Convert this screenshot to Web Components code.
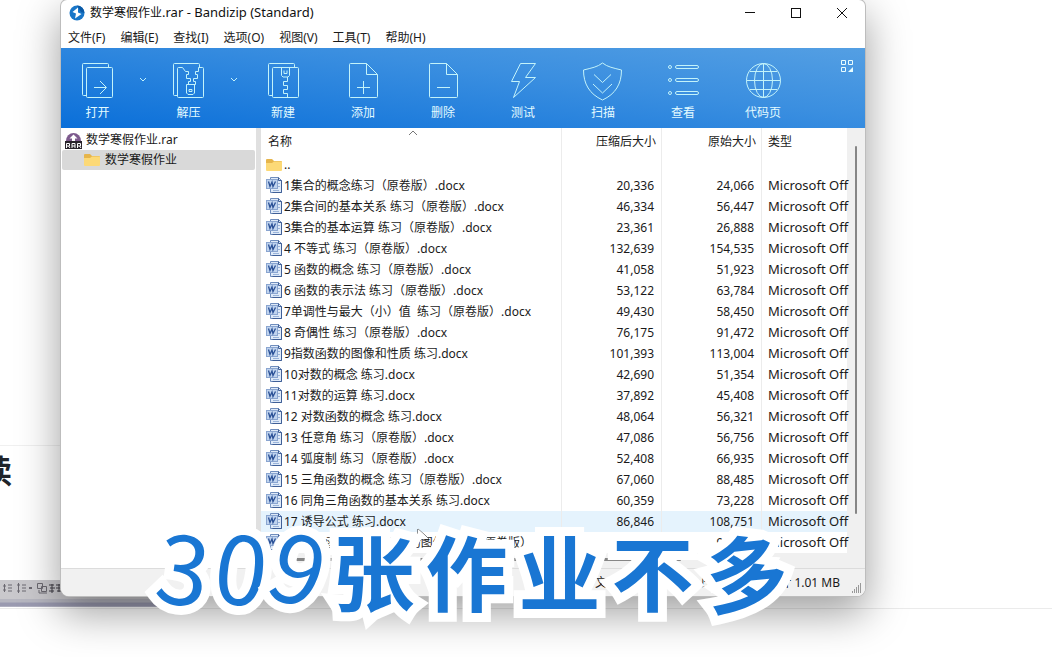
<!DOCTYPE html>
<html lang="zh-CN">
<head>
<meta charset="utf-8">
<title>数学寒假作业.rar - Bandizip</title>
<style>
html, body { margin: 0; min-height: 100%; }
body { font: 12px/20px "Noto Sans", "Noto Sans CJK SC", sans-serif; color: #1a1a1a; background: #fff; overflow: hidden; }
</style>
</head>
<body>
<desk-top>
  <page-behind slot="behind"></page-behind>
  <archive-window>
    <title-bar slot="bar">数学寒假作业<span style="font-size:13px">.rar - Bandizip (Standard)</span></title-bar>
    <menu-bar slot="bar"></menu-bar>
    <tool-bar slot="bar"></tool-bar>
    <folder-tree></folder-tree>
    <file-list></file-list>
    <status-bar slot="foot">文件: 33, 文件夹: 0, 压缩包大小: 共计 1.01 MB</status-bar>
  </archive-window>
  <video-caption slot="over" text="309张作业不多"></video-caption>
</desk-top>
<script>
const define = (name, html, setup) => customElements.define(name, class extends HTMLElement {
  constructor() {
    super();
    const t = document.createElement('template');
    t.innerHTML = html;
    this.attachShadow({ mode: 'open' }).append(t.content.cloneNode(true));
    if (setup) setup(this.shadowRoot, this);
  }
});

define('desk-top', `
<style>
:host { display: block; position: relative; min-height: 100vh; overflow: hidden; }
main { position: relative; padding: 0 187px 61px 61px; }
</style>
<slot name="behind"></slot><main><slot></slot></main><slot name="over"></slot>`);

define('page-behind', `
<style>
:host { position: absolute; inset: 0; background: #fff; }
.word { position: absolute; left: -20px; top: 454px; font-size: 32px; line-height: 34px; font-weight: 700; color: #20242a; }
.rule { position: absolute; left: 0; top: 445px; width: 61px; height: 1px; background: #f0f0f0; }
.line { position: absolute; left: 0; right: 0; top: 608px; height: 1px; background: #ebebeb; }
.strip { position: absolute; left: 0; top: 580px; width: 176px; height: 27px; background: linear-gradient(#c9c8cc 0 19px, #b6b6c0 19px 22px, #9a9ab0 23px 26px, #c5c5d0); }
svg { display: block; }
</style>
<div class="rule"></div><div class="line"></div><div class="word">读</div>
<div class="strip"><svg width="62" height="18" fill="none" stroke="#6b6870"><path d="M4.500 4v8M3 6h3M3 10h3M8 5h4M8 8h4M8 11h4M18.500 3v10M17 5h3M17 11h3M22 5h4M22 8h4M22 11h4"/><path d="M29 8h3" stroke-width="2"/><path d="M37.500 3.500h5v5h-5zM41.500 6.500h5v5h-5zM39 10v3h8"/><path d="M49 5h5M50 8h5M49 11h5M52 4v9M56 5h5M56 8h5M57 11h4M59 4v8" stroke="#3f3d44"/></svg></div>`);

define('archive-window', `
<style>
:host { display: block; background: #fff; border-radius: 6px 6px 8px 8px; overflow: hidden; box-shadow: 0 0 0 1px #bdbdbd, 0 16px 42px 2px rgba(0,0,0,.37); }
.body { display: grid; grid-template-columns: 195px minmax(0, 1fr); }
</style>
<slot name="bar"></slot><div class="body"><slot></slot></div><slot name="foot"></slot>`);

define('title-bar', `
<style>
:host { display: flex; align-items: center; height: 25px; padding: 0 0 2px 8px; gap: 5px; color: #111; }
h1 { font: inherit; margin: 0; flex: 1; }
.ctl { display: flex; }
button { all: unset; width: 46px; height: 24px; display: grid; place-items: center; }
svg { display: block; }
</style>
<svg width="16" height="16" viewBox="0 0 16 16"><circle cx="8" cy="8" r="7.500" fill="#1976c8"/><path d="M8 .5a7.500 7.500 0 0 1 7.500 7.500L12 7z" fill="#0b5aa6"/><path d="M9 2.500L3.500 7l3.500 1.500L6 13.500 12.500 9 9 7.500z" fill="#fff"/></svg>
<h1><slot></slot></h1>
<div class="ctl">
<button aria-label="最小化"><svg width="12" height="12" stroke="#111"><path d="M1 5.500h10"/></svg></button>
<button aria-label="最大化"><svg width="12" height="12" stroke="#111" fill="none"><rect x="1.500" y="1.500" width="9" height="9"/></svg></button>
<button aria-label="关闭"><svg width="12" height="12" stroke="#111"><path d="M1 1l10 10M11 1L1 11"/></svg></button>
</div>`);

define('menu-bar', `
<style>
:host { display: block; height: 21px; padding: 0 7px; }
nav { display: flex; gap: 15px; }
button { all: unset; font: inherit; line-height: 21px; }
</style><nav></nav>`, root => {
  for (const m of ['文件(F)', '编辑(E)', '查找(I)', '选项(O)', '视图(V)', '工具(T)', '帮助(H)']) {
    const b = document.createElement('button');
    b.textContent = m;
    root.querySelector('nav').append(b);
  }
});

const back = '<path d="M8.500 34.500H5.500a1 1 0 0 1-1-1V3.500a1 1 0 0 1 1-1h24a1 1 0 0 1 1 1V6"/>';
const icons = {
  open: back + '<rect x="8.500" y="6.500" width="26" height="30" rx="1"/><path d="M16 26.500h12M22 20l6.500 6.500L22 33"/>',
  extract: back + '<path d="M13.500 6.500h-4a1 1 0 0 0-1 1v28a1 1 0 0 0 1 1h24a1 1 0 0 0 1-1v-28a1 1 0 0 0-1-1h-4v4h-3v3h2v4h-4v3h2v3h-7v-3h2v-3h-4v-4h2v-3h-3zM17.500 23.500h8v8.500l-1.500 1.500h-5L17.500 32zM20 28.500h3v2h-3z"/>',
  create: back + '<rect x="8.500" y="6.500" width="26" height="30" rx="1"/><path d="M17.500 6.500v8l1.500 1.500h5l1.500-1.500v-8M20 9.500v3h3v-3M23.500 16v4.500h-4v4h4v4h-4v4h4v4"/>',
  add: '<path d="M22.500 2.500H6.500a1 1 0 0 0-1 1v32a1 1 0 0 0 1 1h26a1 1 0 0 0 1-1V13.500zV13.500h11M13 26.500h13M19.500 20v13"/>',
  del: '<path d="M22.500 2.500H6.500a1 1 0 0 0-1 1v32a1 1 0 0 0 1 1h26a1 1 0 0 0 1-1V13.500zV13.500h11M13 26.500h13"/>',
  test: '<path d="M16.500 2.500h15l-10 14h10L9.500 36.500l6-16h-8z"/>',
  scan: '<path d="M18.500 2c5 4 11 5 19 7c0 14-6 24-19 30C5.500 33-.5 23-.5 9c8-2 14-3 19-7zM10 13.500l8.500 8 8.500-8M9 23l9.500 9 9.500-9"/>',
  view: '<circle cx="6" cy="6" r="1.500"/><circle cx="6" cy="19" r="1.500"/><circle cx="6" cy="32" r="1.500"/><rect x="11.500" y="4.500" width="23" height="3" rx="1.500"/><rect x="11.500" y="17.500" width="23" height="3" rx="1.500"/><rect x="11.500" y="30.500" width="23" height="3" rx="1.500"/>',
  globe: '<circle cx="19.500" cy="19.500" r="17"/><ellipse cx="19.500" cy="19.500" rx="9" ry="17"/><path d="M2.500 19.500h34M19.500 2.500v34M6 10.500h27M6 28.500h27"/>'
};
define('tool-button', `
<style>
:host { display: block; }
button { all: unset; box-sizing: border-box; width: 100%; display: grid; justify-items: center; font: inherit; line-height: 18px; color: #e3fbff; padding-top: 13px; gap: 4px; }
svg { display: block; overflow: visible; }
</style>
<button><svg width="39" height="39" fill="none" stroke="#c3f3fa"></svg><slot></slot></button>`, (root, el) => {
  root.querySelector('svg').innerHTML = icons[el.getAttribute('icon')];
});

define('tool-bar', `
<style>
:host { display: flex; justify-content: space-between; align-items: flex-start; height: 80px; background: linear-gradient(187deg, #549fe3 0, #3b8fe0 38%, #0a6fd9 100%); }
.tools { display: grid; grid-template-columns: 73px 18px 73px 18px 80px repeat(6, 80px); }
.arrow { all: unset; display: block; align-self: start; padding-top: 28px; }
.arrow svg { display: block; margin: 0 auto; }
.grid { all: unset; margin: 12px 12px 0 0; }
svg { display: block; }
</style>
<div class="tools">
<tool-button icon="open">打开</tool-button>
<button class="arrow" aria-label="打开选项"><svg width="8" height="7" fill="none" stroke="#c3f3fa"><path d="M1 2l3 3 3-3"/></svg></button>
<tool-button icon="extract">解压</tool-button>
<button class="arrow" aria-label="解压选项"><svg width="8" height="7" fill="none" stroke="#c3f3fa"><path d="M1 2l3 3 3-3"/></svg></button>
<tool-button icon="create">新建</tool-button>
<tool-button icon="add">添加</tool-button>
<tool-button icon="del">删除</tool-button>
<tool-button icon="test">测试</tool-button>
<tool-button icon="scan">扫描</tool-button>
<tool-button icon="view">查看</tool-button>
<tool-button icon="globe">代码页</tool-button>
</div>
<button class="grid" aria-label="布局"><svg width="12" height="12" fill="none" stroke="#e8fdff"><path d="M.5.500h4v4h-4zM7.500.500h4v4h-4zM.5 7.500h4v4h-4z"/><path d="M12 7v5H7z" fill="#e8fdff" stroke="none"/></svg></button>`);

const folder = '<svg width="17" height="16" viewBox="0 0 17 16"><path d="M0 3a1 1 0 0 1 1-1h5l2 2h7a1 1 0 0 1 1 1v8H0z" fill="#e6b54c"/><path d="M0 6h6l2-1.500h8V13a1 1 0 0 1-1 1H1a1 1 0 0 1-1-1z" fill="#fcd977"/></svg>';
const word = '<svg width="17" height="17" viewBox="0 0 17 17"><path d="M4.500 .5h8l3 3v12h-11z" fill="#dfeaf8" stroke="#6f8dbd"/><path d="M12.500 .5v3h3v12h-9" fill="none" stroke="#3f5f97"/><path d="M7 13.500h6M12 6.500h2M12 9.500h2" stroke="#9ab4da"/><rect x=".5" y="2.500" width="11" height="9" fill="#bfd3ee" stroke="#8aa5d0"/><path d="M2.500 4.500l1.500 5 2-4.500 1 4.500 2.500-5" fill="none" stroke="#2a5096" stroke-width="1.300"/></svg>';

define('folder-tree', `
<style>
:host { display: block; padding: 2px 1px; }
ul { list-style: none; margin: 0; padding: 0; }
a { display: flex; align-items: center; gap: 4px; height: 20px; padding-left: 3px; color: inherit; text-decoration: none; }
.on { background: #d9d9d9; border-radius: 2px; padding-left: 22px; }
svg { display: block; }
</style>
<ul><li><a href="#root"><svg width="17" height="17" viewBox="0 0 17 17"><path d="M1 9a7.500 8 0 0 1 15 0z" fill="#7d5a8d"/><path d="M8.500 2.500l4 4h-2.500V9H7V6.500H4.500z" fill="#fff"/><rect y="9" width="17" height="8" fill="#29242c"/><path d="M1.500 16v-4.500h3v2.500h-3M3.500 14L5 16M7 16v-4.500h3V16M7 14h3M12.500 16v-4.500h3v2.500h-3M14.500 14l1.500 2" fill="none" stroke="#fff"/></svg>数学寒假作业.rar</a></li>
<li><a class="on" href="#folder">${folder}数学寒假作业</a></li></ul>`);

const rows = [
  ['1集合的概念练习（原卷版）.docx', '20,336', '24,066'],
  ['2集合间的基本关系 练习（原卷版）.docx', '46,334', '56,447'],
  ['3集合的基本运算 练习（原卷版）.docx', '23,361', '26,888'],
  ['4 不等式 练习（原卷版）.docx', '132,639', '154,535'],
  ['5 函数的概念 练习（原卷版）.docx', '41,058', '51,923'],
  ['6 函数的表示法 练习（原卷版）.docx', '53,122', '63,784'],
  ['7单调性与最大（小）值  练习（原卷版）.docx', '49,430', '58,450'],
  ['8 奇偶性 练习（原卷版）.docx', '76,175', '91,472'],
  ['9指数函数的图像和性质 练习.docx', '101,393', '113,004'],
  ['10对数的概念 练习.docx', '42,690', '51,354'],
  ['11对数的运算 练习.docx', '37,892', '45,408'],
  ['12 对数函数的概念 练习.docx', '48,064', '56,321'],
  ['13 任意角 练习（原卷版）.docx', '47,086', '56,756'],
  ['14 弧度制 练习（原卷版）.docx', '52,408', '66,935'],
  ['15 三角函数的概念 练习（原卷版）.docx', '67,060', '88,485'],
  ['16 同角三角函数的基本关系 练习.docx', '60,359', '73,228'],
  ['17 诱导公式 练习.docx', '86,846', '108,751'],
  ['18 正弦函数、余弦函数的图像 练习（原卷版）.docx', '80,216', '96,240']
];
define('file-list', `
<style>
:host { display: grid; grid-template-columns: minmax(0, 1fr) 18px; grid-template-rows: auto 15px; border-left: 5px solid #e0e0e0; background: #f0f0f0; }
.pane { background: #fff; }
table { border-collapse: separate; border-spacing: 0; table-layout: fixed; width: 100%; }
th, td { padding: 0 7px; font-weight: 400; text-align: left; white-space: pre; line-height: 21px; height: 21px; border-right: 1px solid #ececec; }
thead th { height: 24px; line-height: 24px; padding-top: 2px; }
td:last-child { padding: 0 0 0 6px; border-right: 0; font-size: 13px; }
th:last-child { padding: 2px 0 0 6px; border-right: 0; }
.num { text-align: right; }
th.num { padding-right: 5px; }
th.name { position: relative; }
td.name { padding: 0 0 0 5px; }
.cell { display: flex; align-items: center; gap: 1px; height: 21px; }
.sel { background: #e5f3fd; }
.sort { position: absolute; left: 147px; top: 2px; }
svg { display: block; flex: none; }
.v { padding: 18px 8px 39px; display: grid; }
.h { padding: 5px 166px 7px 5px; display: grid; }
i { display: block; background: #868686; border-radius: 1px; }
</style>
<div class="pane"><table>
<colgroup><col><col style="width:100px"><col style="width:100px"><col style="width:85px"></colgroup>
<thead><tr><th class="name">名称<svg class="sort" width="10" height="6" fill="none" stroke="#777"><path d="M1 5l4-4 4 4"/></svg></th><th class="num">压缩后大小</th><th class="num">原始大小</th><th>类型</th></tr></thead>
<tbody></tbody></table></div>
<div class="v"><i></i></div><div class="h"><i></i></div>`, root => {
  const body = root.querySelector('tbody');
  const add = (icon, name, packed, size, type) => {
    const tr = body.insertRow();
    if (name.startsWith('17')) tr.className = 'sel';
    tr.innerHTML = `<td class="name"><div class="cell">${icon}<span>${name}</span></div></td><td class="num">${packed}</td><td class="num">${size}</td><td>${type}</td>`;
  };
  add(folder, '..', '', '', '');
  for (const r of rows) add(word, ...r, 'Microsoft Off');
});

define('status-bar', `
<style>
:host { display: flex; justify-content: flex-end; align-items: center; gap: 11px; height: 27px; border-top: 1px solid #dcdcdc; background: #f1f1f1; padding-right: 3px; }
svg { display: block; align-self: flex-end; margin-bottom: 3px; }
</style>
<span><slot></slot></span><svg width="11" height="11" stroke="#999"><path d="M1.500 9v2M3.500 7v4M5.500 5v6M7.500 3v8M9.500 1v10"/></svg>`);

define('video-caption', `
<style>
:host { position: absolute; left: 158px; top: 510px; isolation: isolate; font: 700 82px/108px "Noto Sans CJK SC", sans-serif; color: #1976d3; white-space: nowrap; -webkit-text-stroke: 18px #fff; paint-order: stroke fill; }
p { margin: 0; display: flex; align-items: baseline; gap: 11px; }
.digit { font-size: 94px; font-weight: 400; margin-right: -5px; transform: rotate(8deg); }
.lean { transform: rotate(18deg); }
.rise { transform: rotate(-6deg); }
svg { position: absolute; left: 259px; top: 18px; z-index: -1; }
</style>
<svg width="14" height="18" viewBox="0 0 14 18"><path d="M1 1v14l4-4 7 0z" fill="#fff" stroke="#222" stroke-width="1"/></svg><p></p>`, (root, el) => {
  const pose = { 3: 'digit', 0: 'digit', 9: 'digit lean', 多: 'rise' };
  for (const ch of el.getAttribute('text')) {
    const s = document.createElement('span');
    s.textContent = ch;
    s.className = pose[ch] || '';
    root.querySelector('p').append(s);
  }
});
</script>
</body>
</html>
